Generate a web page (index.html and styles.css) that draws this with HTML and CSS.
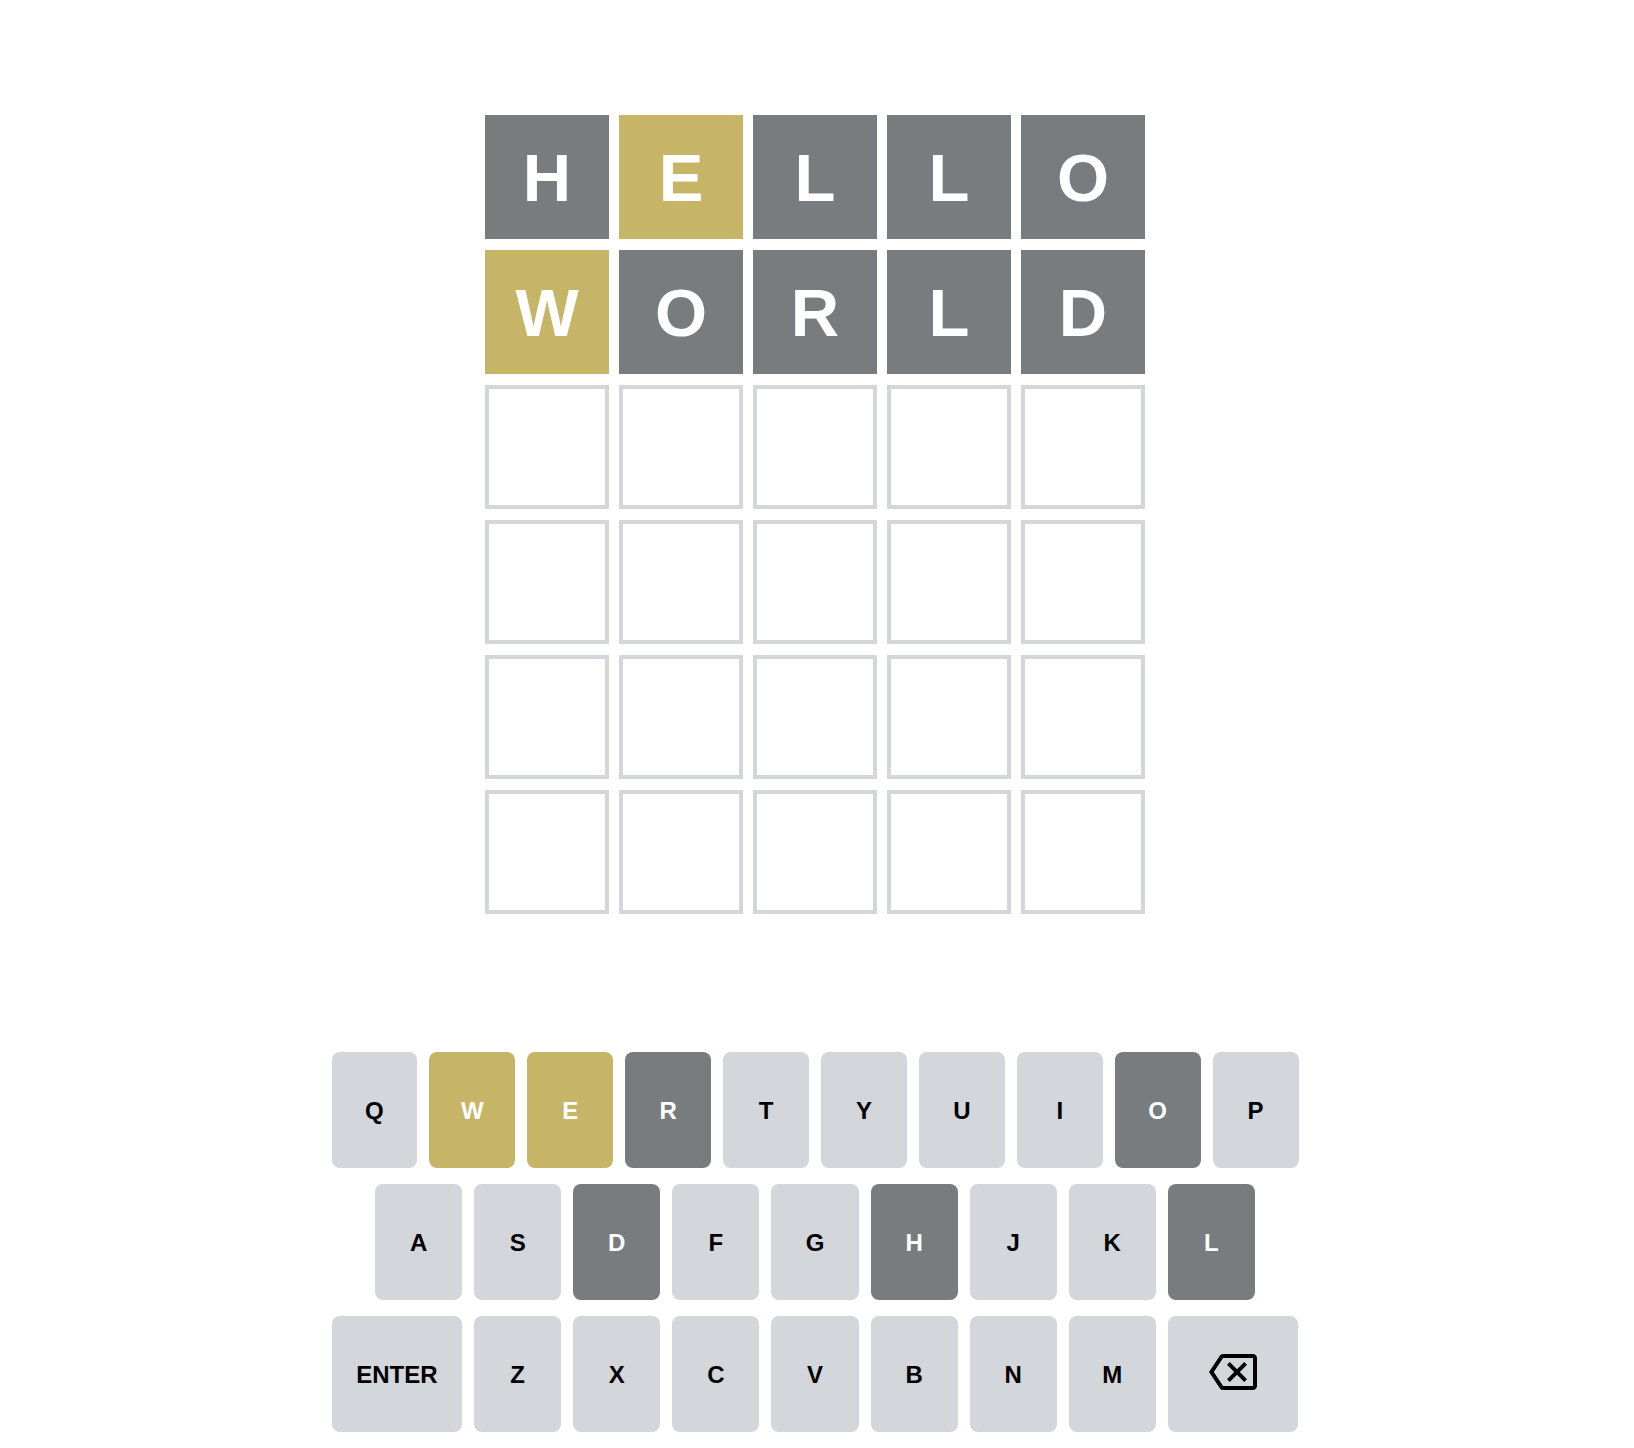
FILE: index.html
```html
<!DOCTYPE html>
<html lang="en">
<head>
<meta charset="utf-8">
<title>Wordle</title>
<link rel="stylesheet" href="styles.css">
</head>
<body>
<main class="app">
  <div class="board">
    <div class="tile absent">H</div>
    <div class="tile present">E</div>
    <div class="tile absent">L</div>
    <div class="tile absent">L</div>
    <div class="tile absent">O</div>

    <div class="tile present">W</div>
    <div class="tile absent">O</div>
    <div class="tile absent">R</div>
    <div class="tile absent">L</div>
    <div class="tile absent">D</div>

    <div class="tile"></div><div class="tile"></div><div class="tile"></div><div class="tile"></div><div class="tile"></div>
    <div class="tile"></div><div class="tile"></div><div class="tile"></div><div class="tile"></div><div class="tile"></div>
    <div class="tile"></div><div class="tile"></div><div class="tile"></div><div class="tile"></div><div class="tile"></div>
    <div class="tile"></div><div class="tile"></div><div class="tile"></div><div class="tile"></div><div class="tile"></div>
  </div>

  <div class="keyboard">
    <div class="key-row">
      <button class="key">Q</button>
      <button class="key present">W</button>
      <button class="key present">E</button>
      <button class="key absent">R</button>
      <button class="key">T</button>
      <button class="key">Y</button>
      <button class="key">U</button>
      <button class="key">I</button>
      <button class="key absent">O</button>
      <button class="key">P</button>
    </div>
    <div class="key-row">
      <div class="spacer"></div>
      <button class="key">A</button>
      <button class="key">S</button>
      <button class="key absent">D</button>
      <button class="key">F</button>
      <button class="key">G</button>
      <button class="key absent">H</button>
      <button class="key">J</button>
      <button class="key">K</button>
      <button class="key absent">L</button>
      <div class="spacer"></div>
    </div>
    <div class="key-row">
      <button class="key wide">ENTER</button>
      <button class="key">Z</button>
      <button class="key">X</button>
      <button class="key">C</button>
      <button class="key">V</button>
      <button class="key">B</button>
      <button class="key">N</button>
      <button class="key">M</button>
      <button class="key wide" aria-label="backspace">
        <svg class="backspace" viewBox="0 0 24 24" width="48" height="48">
          <path fill="currentColor" d="M22 3H7c-.69 0-1.23.35-1.59.88L0 12l5.410 8.11c.36.53.9.89 1.59.89h15c1.1 0 2-.9 2-2V5c0-1.1-.9-2-2-2zm0 16H7.07L2.4 12l4.66-7H22v14zm-11.59-2L14 13.41 17.59 17 19 15.59 15.41 12 19 8.41 17.59 7 14 10.59 10.41 7 9 8.41 12.59 12 9 15.590z"/>
        </svg>
      </button>
    </div>
  </div>
</main>
</body>
</html>
```

FILE: styles.css
```css
:root {
  --gray: #787c7e;
  --yellow: #c6b566;
  --light: #d3d6da;
  --ink: #000000;
}

* {
  box-sizing: border-box;
}

html, body {
  margin: 0;
  background: #ffffff;
}

body {
  font-family: "Liberation Sans", Arial, Helvetica, sans-serif;
}

.app {
  display: flex;
  flex-direction: column;
  align-items: center;
  padding: 115px 4px 0 0;
}

/* guess grid */
.board {
  display: grid;
  grid-template-columns: repeat(5, 124px);
  grid-auto-rows: 124px;
  column-gap: 10px;
  row-gap: 11px;
}

.tile {
  display: flex;
  align-items: center;
  justify-content: center;
  border: 4px solid var(--light);
  color: #ffffff;
  font-size: 67px;
  font-weight: 700;
  line-height: 1;
  text-transform: uppercase;
}

.tile.absent {
  background: var(--gray);
  border-color: var(--gray);
}

.tile.present {
  background: var(--yellow);
  border-color: var(--yellow);
}

/* on-screen keyboard */
.keyboard {
  width: 967px;
  margin-top: 138px;
}

.key-row {
  display: flex;
  margin-bottom: 16px;
}

.key-row:last-child {
  margin-bottom: 0;
}

.key {
  flex: 1;
  height: 116px;
  margin: 0 12px 0 0;
  padding: 2px 0 0;
  border: 0;
  border-radius: 8px;
  background: var(--light);
  color: var(--ink);
  font-family: inherit;
  font-size: 24px;
  font-weight: 700;
  display: flex;
  align-items: center;
  justify-content: center;
}

.key:last-of-type {
  margin-right: 0;
}

.key.wide {
  flex: 1.5;
}

.key.absent {
  background: var(--gray);
  color: #ffffff;
}

.key.present {
  background: var(--yellow);
  color: #ffffff;
}

.spacer {
  flex: 0.5;
}

.backspace {
  display: block;
  margin-bottom: 7px;
}
```
